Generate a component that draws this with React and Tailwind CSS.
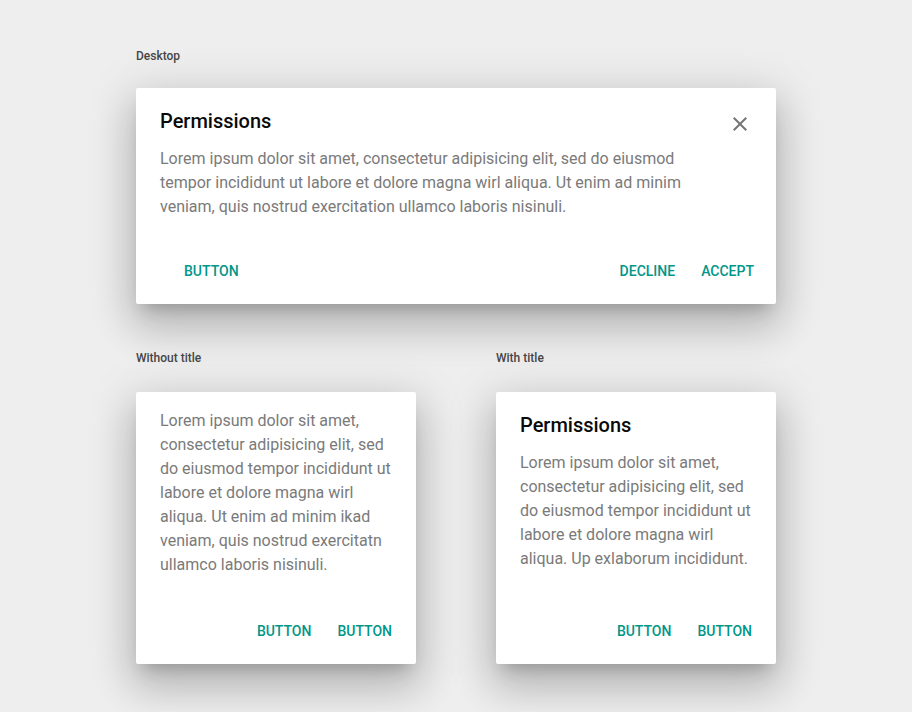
export default function App() {
  const font = { fontFamily: "Roboto, 'Noto Sans', sans-serif" };
  const card =
    "bg-white rounded-[2px] shadow-[0_11px_15px_-7px_rgba(0,0,0,0.2),0_24px_38px_3px_rgba(0,0,0,0.14),0_9px_46px_8px_rgba(0,0,0,0.12)]";
  const btn =
    "h-9 px-2 flex items-center text-sm leading-5 font-medium uppercase text-[#009688]";
  const label = "text-xs leading-4 font-medium text-[#454545]";
  const body = "text-base leading-6 text-[#7a7a7a]";
  const title = "text-xl leading-6 font-medium text-[#0a0a0a]";
  return (
    <div className="min-h-[712px] w-full bg-[#eeeeee]" style={font}>
      <div className="w-[640px] ml-[136px] pt-[48px]">
        <div className={label}>Desktop</div>
        <div className={`${card} mt-6 flex flex-col`}>
          <div className="pt-[21px] px-6 flex items-start justify-between">
            <div className={title}>Permissions</div>
            <svg className="mt-[3px] -mb-[3px]" width="24" height="24" viewBox="0 0 24 24" fill="#757575">
              <path d="M19 6.41 17.59 5 12 10.59 6.41 5 5 6.41 10.59 12 5 17.59 6.41 19 12 13.41 17.59 19 19 17.59 13.41 12z" />
            </svg>
          </div>
          <p className={`${body} mt-[14px] pl-6 pr-14`}>
            Lorem ipsum dolor sit amet, consectetur adipisicing elit, sed do eiusmod tempor incididunt ut labore et dolore magna wirl aliqua. Ut enim ad minim veniam, quis nostrud exercitation ullamco laboris nisinuli.
          </p>
          <div className="mt-[34px] pb-[15px] pl-4 pr-[14px] flex items-center">
            <button className={`${btn} ml-6`}>Button</button>
            <div className="ml-auto flex gap-[10px]">
              <button className={btn}>Decline</button>
              <button className={btn}>Accept</button>
            </div>
          </div>
        </div>

        <div className="mt-[46px] grid grid-cols-2 gap-x-20">
          <div>
            <div className={label}>Without title</div>
            <div className={`${card} mt-[26px] h-[272px] flex flex-col`}>
              <p className={`${body} pt-[17px] px-6`}>
                Lorem ipsum dolor sit amet, consectetur adipisicing elit, sed do eiusmod tempor incididunt ut labore et dolore magna wirl aliqua. Ut enim ad minim ikad veniam, quis nostrud exercitatn ullamco laboris nisinuli.
              </p>
              <div className="mt-auto pb-[15px] px-4 flex justify-end gap-[10px]">
                <button className={btn}>Button</button>
                <button className={btn}>Button</button>
              </div>
            </div>
          </div>
          <div>
            <div className={label}>With title</div>
            <div className={`${card} mt-[26px] h-[272px] flex flex-col`}>
              <div className={`${title} pt-[21px] px-6`}>Permissions</div>
              <p className={`${body} mt-[14px] px-6`}>
                Lorem ipsum dolor sit amet, consectetur adipisicing elit, sed do eiusmod tempor incididunt ut labore et dolore magna wirl aliqua. Up exlaborum incididunt.
              </p>
              <div className="mt-auto pb-[15px] px-4 flex justify-end gap-[10px]">
                <button className={btn}>Button</button>
                <button className={btn}>Button</button>
              </div>
            </div>
          </div>
        </div>
      </div>
    </div>
  );
}
